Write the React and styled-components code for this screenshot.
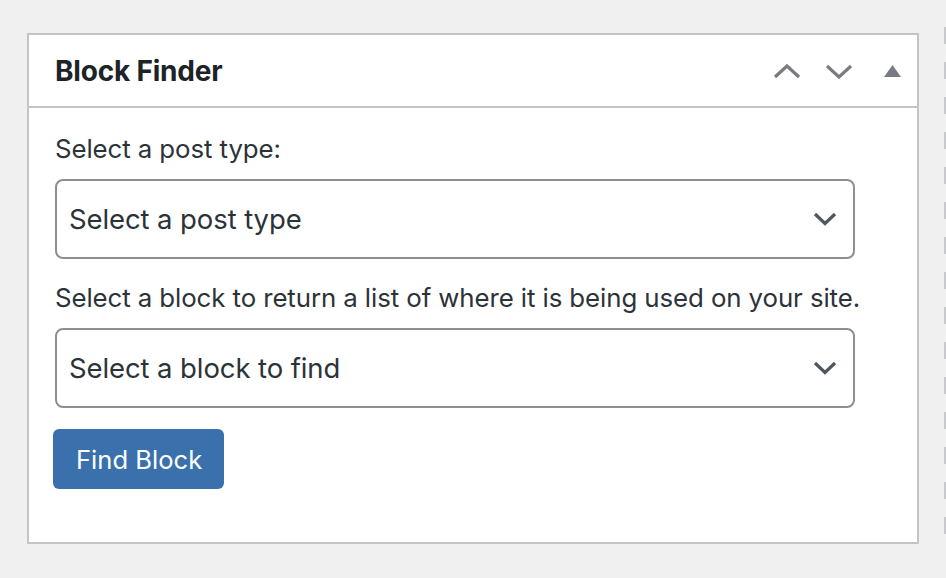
import React from "react";
import styled, { createGlobalStyle } from "styled-components";

const GlobalStyle = createGlobalStyle`
  html, body {
    margin: 0;
    padding: 0;
    background: #f0f0f1;
  }
  body {
    font-family: Inter, "Noto Sans", "Liberation Sans", sans-serif;
    color: #1d2327;
  }
`;

const Page = styled.div`
  display: flex;
  align-items: flex-start;
  padding: 33px 0 0 27px;
  width: 946px;
  height: 578px;
  box-sizing: border-box;
  overflow: hidden;
`;

const Postbox = styled.div`
  width: 892px;
  box-sizing: border-box;
  background: #fff;
  border: 2px solid #c3c4c7;
`;

const Header = styled.div`
  display: flex;
  align-items: center;
  height: 71px;
  padding: 0 1px 0 26px;
  border-bottom: 2px solid #c3c4c7;
`;

const Title = styled.h2`
  flex: 1;
  margin: 0;
  font-size: 28px;
  font-weight: 700;
  letter-spacing: -0.2px;
  color: #1d2327;
`;

const HandleActions = styled.div`
  display: flex;
  align-items: center;
`;

const HandleButton = styled.button`
  display: flex;
  align-items: center;
  justify-content: center;
  box-sizing: border-box;
  padding: 0 0 0 ${(p) => p.$pl || 0}px;
  border: 0;
  background: none;
  width: ${(p) => p.$w}px;
  height: 30px;
  color: #787c82;
  cursor: pointer;
`;

const Inside = styled.div`
  padding: 23px 26px 53px 26px;
  display: flex;
  flex-direction: column;
  align-items: flex-start;
`;

const Label = styled.label`
  font-size: 25.85px;
  line-height: 36px;
  color: #2c3338;
  letter-spacing: -0.1px;
  margin-bottom: 12px;
`;

const SelectBox = styled.div`
  width: 800px;
  height: 80px;
  box-sizing: border-box;
  border: 2px solid #8c8f94;
  border-radius: 8px;
  display: flex;
  align-items: center;
  padding: 0 16px 0 12px;
  margin-bottom: ${(p) => p.$gap}px;
  cursor: pointer;
`;

const SelectText = styled.span`
  flex: 1;
  font-size: 27.5px;
  color: #2c3338;
  letter-spacing: -0.1px;
`;

const PrimaryButton = styled.button`
  margin-left: -2px;
  height: 60px;
  padding: 0 22px 0 23px;
  border: 0;
  border-radius: 6px;
  background: #3a71ad;
  color: #fff;
  font-family: inherit;
  font-size: 25.6px;
  cursor: pointer;
`;

const EdgeStrip = styled.div`
  margin-left: 25px;
  margin-top: -6px;
  width: 2px;
  height: 514px;
  background: repeating-linear-gradient(
    to bottom,
    #c8c9cc 0px,
    #c8c9cc 17px,
    transparent 17px,
    transparent 35px
  );
`;

const Chevron = ({ up }) => (
  <svg width="28" height="16" viewBox="0 0 28 16" fill="none">
    <polyline
      points={up ? "2,14 14,3 26,14" : "2,3 14,14 26,3"}
      stroke="currentColor"
      strokeWidth="3.2"
    />
  </svg>
);

const Triangle = () => (
  <svg width="17" height="12" viewBox="0 0 17 12">
    <polygon points="8.5,0 17,12 0,12" fill="currentColor" />
  </svg>
);

const SelectArrow = () => (
  <svg width="24" height="14" viewBox="0 0 24 14" fill="none">
    <polyline points="2,2 12,11.5 22,2" stroke="#50575e" strokeWidth="3.2" />
  </svg>
);

const Select = ({ children, gap }) => (
  <SelectBox $gap={gap}>
    <SelectText>{children}</SelectText>
    <SelectArrow />
  </SelectBox>
);

export default function App() {
  return (
    <>
      <GlobalStyle />
      <Page>
        <Postbox>
          <Header>
            <Title>Block Finder</Title>
            <HandleActions>
              <HandleButton $w={52} aria-label="Move up">
                <Chevron up />
              </HandleButton>
              <HandleButton $w={52} aria-label="Move down">
                <Chevron />
              </HandleButton>
              <HandleButton $w={51} $pl={3} aria-label="Toggle panel">
                <Triangle />
              </HandleButton>
            </HandleActions>
          </Header>
          <Inside>
            <Label>Select a post type:</Label>
            <Select gap={21}>Select a post type</Select>
            <Label>Select a block to return a list of where it is being used on your site.</Label>
            <Select gap={21}>Select a block to find</Select>
            <PrimaryButton>Find Block</PrimaryButton>
          </Inside>
        </Postbox>
        <EdgeStrip />
      </Page>
    </>
  );
}
